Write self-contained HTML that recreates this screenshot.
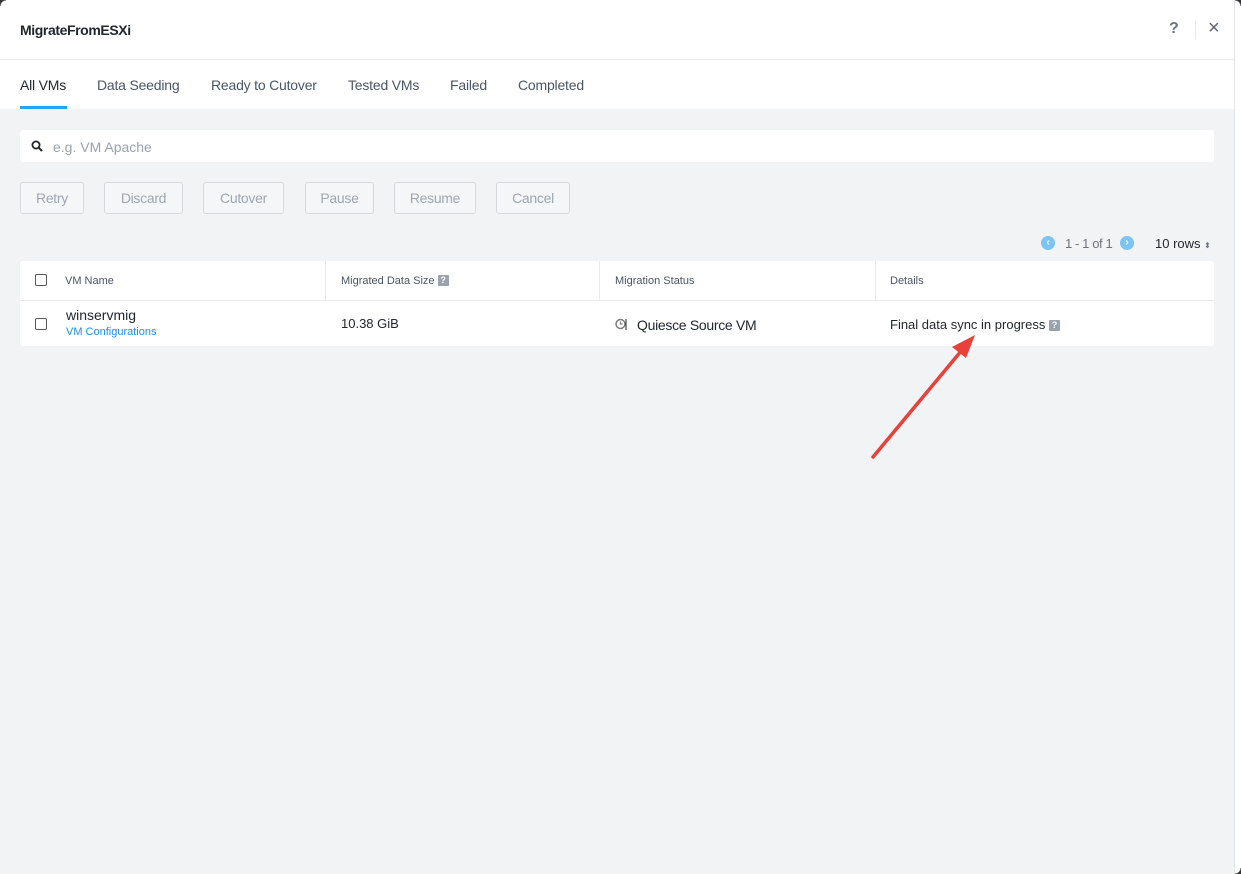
<!DOCTYPE html>
<html><head><style>
*{box-sizing:border-box;margin:0;padding:0}
body{width:1241px;height:874px;background:#fff;font-family:"Liberation Sans",sans-serif;overflow:hidden;position:relative}
.win{position:absolute;left:0;top:0;width:1235px;height:874px;background:#f2f3f5;border-right:1px solid #e2e4e8;overflow:hidden}
.hdr{height:60px;background:#fff;border-bottom:1px solid #e8eaed;position:relative}
.hdr h1{position:absolute;left:20px;top:22px;font-size:14px;font-weight:bold;color:#22272e;letter-spacing:-0.4px}
.tabs{height:49px;background:#fff;position:relative}
.tab{position:absolute;top:17px;font-size:14px;color:#4b5565;letter-spacing:-0.2px}
.tab.a{color:#22272e}
.ul{position:absolute;left:20px;top:46px;width:47px;height:3px;background:#22a5f7}
.search{position:absolute;left:20px;top:130px;width:1194px;height:32px;background:#fff;border-radius:3px}
.search span{position:absolute;left:33px;top:9px;font-size:14px;color:#9aa2ae}
.btn{position:absolute;top:182px;height:32px;border:1px solid #d5d9de;border-radius:3px;background:#f5f6f8;color:#a0a7b1;font-size:14px;text-align:center;line-height:30px;letter-spacing:-0.3px}
.tbl{position:absolute;left:20px;top:261px;width:1194px;height:85px;background:#fff;border-radius:3px}
.th{position:absolute;top:14px;font-size:11px;color:#4b5565}
.sep{position:absolute;top:0;width:1px;height:39px;background:#e8eaed}
.cb{position:absolute;width:12px;height:12px;border:1px solid #555;border-radius:2px;background:#fff}
.q{display:inline-block;width:11px;height:11px;background:#9aa2ae;color:#fff;font-size:9px;font-weight:bold;text-align:center;line-height:11px;border-radius:1px;vertical-align:1px}
</style></head><body>
<div class="win">
<div class="hdr"><h1>MigrateFromESXi</h1>
<div style="position:absolute;left:1169px;top:20px;font-size:16px;color:#6b7480;font-weight:bold">?</div>
<div style="position:absolute;left:1195px;top:21px;width:1px;height:18px;background:#e5e7ea"></div>
<div style="position:absolute;left:1208px;top:17px;font-size:20px;color:#5a6472">×</div>
</div>
<div class="tabs">
<div class="tab a" style="left:20px">All VMs</div>
<div class="tab" style="left:97px">Data Seeding</div>
<div class="tab" style="left:211px">Ready to Cutover</div>
<div class="tab" style="left:348px">Tested VMs</div>
<div class="tab" style="left:450px">Failed</div>
<div class="tab" style="left:518px">Completed</div>
<div class="ul"></div>
</div>
<div class="search"><svg style="position:absolute;left:11px;top:10px" width="12" height="12" viewBox="0 0 12 12"><circle cx="5" cy="5" r="3.6" fill="none" stroke="#22272e" stroke-width="1.8"/><path d="M7.6 7.6L11 11" stroke="#22272e" stroke-width="2"/></svg><span>e.g. VM Apache</span></div>
<div class="btn" style="left:20px;width:64px">Retry</div>
<div class="btn" style="left:104px;width:79px">Discard</div>
<div class="btn" style="left:203px;width:81px">Cutover</div>
<div class="btn" style="left:305px;width:69px">Pause</div>
<div class="btn" style="left:394px;width:82px">Resume</div>
<div class="btn" style="left:496px;width:74px">Cancel</div>
<div style="position:absolute;left:1041px;top:236px;width:14px;height:14px;border-radius:50%;background:#7cc4f4;color:#fff;font-size:10px;text-align:center;line-height:14px;font-weight:bold">‹</div>
<div style="position:absolute;left:1065px;top:236px;font-size:13px;color:#6b7480;letter-spacing:-0.4px">1 - 1 of 1</div>
<div style="position:absolute;left:1120px;top:236px;width:14px;height:14px;border-radius:50%;background:#7cc4f4;color:#fff;font-size:10px;text-align:center;line-height:14px;font-weight:bold">›</div>
<div style="position:absolute;left:1155px;top:236px;font-size:13px;color:#22272e">10 rows <span style="font-size:8px;color:#6b7480">⬍</span></div>
<div class="tbl">
<div class="cb" style="left:15px;top:13px"></div>
<div class="th" style="left:45px">VM Name</div>
<div class="sep" style="left:305px"></div>
<div class="th" style="left:321px">Migrated Data Size <span class="q">?</span></div>
<div class="sep" style="left:579px"></div>
<div class="th" style="left:595px">Migration Status</div>
<div class="sep" style="left:855px"></div>
<div class="th" style="left:870px">Details</div>
<div style="position:absolute;left:0;top:39px;width:1194px;height:1px;background:#e8eaed"></div>
<div class="cb" style="left:15px;top:57px"></div>
<div style="position:absolute;left:46px;top:46px;font-size:14px;color:#22272e">winservmig</div>
<div style="position:absolute;left:46px;top:65px;font-size:11px;color:#1b90e6">VM Configurations</div>
<div style="position:absolute;left:321px;top:55px;font-size:13px;color:#22272e">10.38 GiB</div>
<svg style="position:absolute;left:595px;top:57px" width="12" height="12" viewBox="0 0 12 12"><circle cx="5.5" cy="6" r="4.5" fill="none" stroke="#777" stroke-width="1.4"/><path d="M5.5 3.5V6H7.5" fill="none" stroke="#777" stroke-width="1.2"/><path d="M11 1V12" stroke="#22272e" stroke-width="1"/></svg>
<div style="position:absolute;left:617px;top:56px;font-size:14px;color:#22272e;letter-spacing:-0.3px">Quiesce Source VM</div>
<div style="position:absolute;left:870px;top:56px;font-size:13px;color:#22272e">Final data sync in progress <span class="q">?</span></div>
</div>
<svg style="position:absolute;left:0;top:0" width="1236" height="874"><path d="M873 457L962 350" stroke="#e8403a" stroke-width="3.5" stroke-linecap="round"/><path d="M975 335L952 347L966 358Z" fill="#e8403a"/></svg>
</div>
<div style="position:absolute;left:0;top:0;width:6px;height:6px;background:radial-gradient(circle at 6px 6px,transparent 5px,#333 6px)"></div>
<div style="position:absolute;left:1235px;top:0;width:6px;height:6px;background:radial-gradient(circle at 0 6px,transparent 5px,#333 6px)"></div>
<div style="position:absolute;left:1235px;top:868px;width:6px;height:6px;background:radial-gradient(circle at 0 0,transparent 5px,#333 6px)"></div>
</body></html>
